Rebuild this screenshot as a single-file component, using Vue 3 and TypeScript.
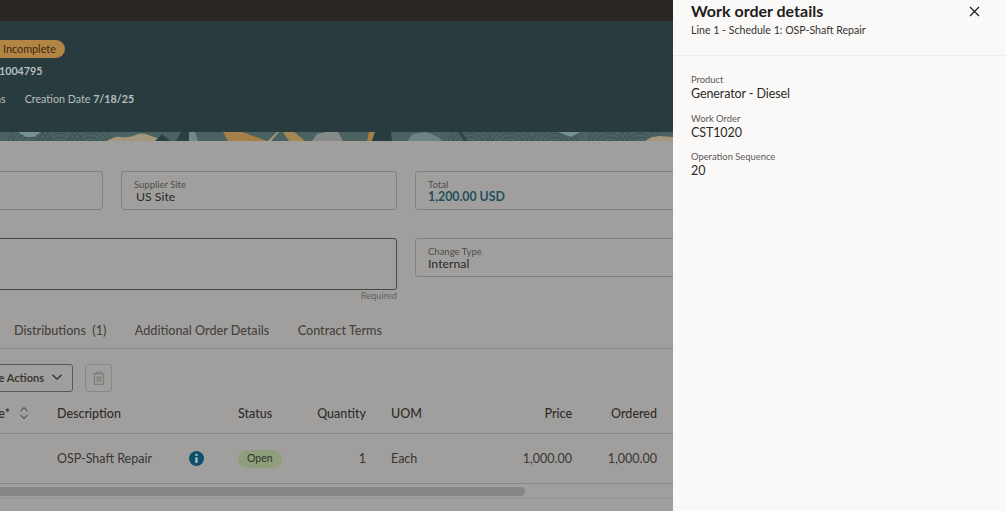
<script setup lang="ts">
interface Column { label: string; cls: string }
const columns: Column[] = [
  { label: 'Description', cls: 'left' },
  { label: 'Status', cls: 'left' },
  { label: 'Quantity', cls: 'right' },
  { label: 'UOM', cls: 'left uom' },
  { label: 'Price', cls: 'right' },
  { label: 'Ordered', cls: 'right' },
]
const details = [
  { label: 'Product', value: 'Generator - Diesel' },
  { label: 'Work Order', value: 'CST1020' },
  { label: 'Operation Sequence', value: '20' },
]
const arcs = [470, 510, 555, 610, 640, 30, 60, 90]
const rings = [3, 7, 11, 15, 19, 23]
</script>

<template>
  <div class="app">
    <main class="page">
      <div class="topbar"></div>
      <header class="hero">
        <div class="hero-text">
          <div class="badge-row"><span class="badge">Incomplete</span></div>
          <div class="order-no">1004795</div>
          <div class="meta">
            <span class="meta-item">Items</span>
            <span class="meta-item">Creation Date <b>7/18/25</b></span>
          </div>
        </div>
        <svg class="pattern" viewBox="0 0 673 9" width="673" height="9" preserveAspectRatio="none" aria-hidden="true">
          <rect width="673" height="9" fill="#4a6361" />
          <g v-for="x in arcs" :key="x" fill="none" stroke="#324a49" stroke-width=".7">
            <circle v-for="r in rings" :key="r" :cx="x" cy="16" :r="r" />
          </g>
          <path d="M18 0h23l-7 5H26z" fill="#76918f" />
          <path d="M107 9c5-3 9-5 14-4 7 1 13-1 17-3 6-2 12 2 27 7z" fill="#a5977c" />
          <path d="M155 9l7-7 8 7zM176 9l5-9h10v9z" fill="#2c4043" />
          <path d="M189 0h6l3 9h-9z" fill="#728988" />
          <path d="M223 0h19l25 9h-39z" fill="#a67f47" />
          <path d="M268 9l9-9h2l-8 9z" fill="#a99a7f" />
          <path d="M283 0h11l11 9h-16z" fill="#a68752" />
          <path d="M312 9l5-7 9-2h12l5 9z" fill="#868a88" />
          <path d="M367 9l2-9h6l-3 9z" fill="#a87d40" />
          <path d="M372 9l3-9h16l1 9z" fill="#293c3f" />
          <path d="M408 9l4-7 14-2 12 5 4 4z" fill="#6f8384" />
          <path d="M458 0h4l6 9h-4z" fill="#2f4746" />
          <path d="M558 0h22l-9 5z" fill="#76918f" />
          <path d="M645 9l7-4 8-1 13 1v4z" fill="#a5977c" />
        </svg>
      </header>

      <section class="form">
        <div class="field"></div>
        <div class="field">
          <label>Supplier Site</label>
          <div class="value inset">US Site</div>
        </div>
        <div class="field">
          <label>Total</label>
          <div class="value total">1,200.00 USD</div>
        </div>
        <div class="area-wrap">
          <div class="textarea"></div>
          <div class="required">Required</div>
        </div>
        <div class="field">
          <label>Change Type</label>
          <div class="value">Internal</div>
        </div>
      </section>

      <nav class="tabs">
        <span>Distributions&nbsp; (1)</span>
        <span>Additional Order Details</span>
        <span>Contract Terms</span>
      </nav>

      <div class="toolbar">
        <button class="actions" type="button">
          More Actions
          <svg width="12" height="12" viewBox="0 0 12 12" aria-hidden="true"><path d="M1.500 3.800 6 8.200l4.500-4.400" fill="none" stroke="#2f2d2b" stroke-width="1.300" /></svg>
        </button>
        <button class="trash" type="button" aria-label="Delete">
          <svg width="16" height="16" viewBox="0 0 16 16" aria-hidden="true">
            <path d="M2.500 3.800h11M6 3.600V2h4v1.600M3.500 3.800v10.400h9V3.800M6.200 6.200v5.600M8 6.200v5.600M9.800 6.200v5.600" fill="none" stroke="#7b7977" stroke-width="1.100" />
          </svg>
        </button>
      </div>

      <div class="row head">
        <div class="first">
          <span class="clip">Type*</span>
          <svg class="sort" width="10" height="14" viewBox="0 0 10 14" aria-hidden="true"><path d="M1.500 5 5 1.600 8.500 5M1.500 9 5 12.400 8.500 9" fill="none" stroke="#2f2d2b" stroke-width="1" /></svg>
        </div>
        <div v-for="c in columns" :key="c.label" :class="c.cls">{{ c.label }}</div>
      </div>

      <div class="row body">
        <div class="first"></div>
        <div class="left desc">
          <span>OSP-Shaft Repair</span>
          <svg class="info" width="15" height="15" viewBox="0 0 15 15" aria-hidden="true">
            <circle cx="7.500" cy="7.500" r="7.500" fill="#0f4e6a" />
            <circle cx="7.500" cy="3.900" r="1.200" fill="#a9c0c6" />
            <path d="M6.300 6.300h2.300v5.600H6.300z" fill="#a9c0c6" />
          </svg>
        </div>
        <div class="left"><span class="pill">Open</span></div>
        <div class="right">1</div>
        <div class="left uom">Each</div>
        <div class="right">1,000.00</div>
        <div class="right">1,000.00</div>
      </div>

      <div class="scrollbar"><div class="thumb"></div></div>
    </main>

    <aside class="panel">
      <div class="panel-head">
        <div class="titles">
          <h2>Work order details</h2>
          <p>Line 1 - Schedule 1: OSP-Shaft Repair</p>
        </div>
        <svg class="close" width="11" height="11" viewBox="0 0 11 11" aria-label="Close">
          <path d="M1 1l9 9M10 1l-9 9" stroke="#1f1d1b" stroke-width="1.200" fill="none" />
        </svg>
      </div>
      <div class="panel-body">
        <div v-for="d in details" :key="d.label" class="detail">
          <div class="d-label">{{ d.label }}</div>
          <div class="d-value">{{ d.value }}</div>
        </div>
      </div>
    </aside>
  </div>
</template>

<style scoped>
.app {
  display: flex;
  width: 1006px;
  height: 511px;
  overflow: hidden;
  font-family: Lato, "Noto Sans", sans-serif;
  color: #2b2927;
}
.page {
  width: 673px;
  flex: none;
  overflow: hidden;
  background: #a19f9d;
  display: flex;
  flex-direction: column;
}
.topbar { height: 21px; background: #2a2623; flex: none; }
.hero { background: #283c3f; flex: none; height: 120px; display: flex; flex-direction: column; justify-content: space-between; }
.hero-text { padding-top: 19px; color: #b9bebd; font-size: 10.700px; }
.badge-row { display: flex; height: 18px; }
.badge {
  margin-left: -20px;
  padding: 0 9px 0 23px;
  border-radius: 9px;
  background: #b38545;
  color: #3b2710;
  font-size: 10.800px;
  line-height: 18px;
}
.order-no { margin-top: 5px; margin-left: -1px; font-weight: 700; line-height: 16px; }
.meta { display: flex; gap: 19px; margin-top: 12px; margin-left: -20px; line-height: 16px; }
.meta b { font-weight: 700; }
.pattern { display: block; flex: none; }

.form {
  flex: none;
  margin: 30px 0 0 -173px;
  display: grid;
  grid-template-columns: 276px 276px 276px;
  gap: 28px 18px;
  align-items: start;
}
.field {
  height: 39px;
  box-sizing: border-box;
  border: 1px solid #838180;
  border-radius: 3px;
  padding: 7px 12px 0;
}
.field label { display: block; font-size: 9.500px; line-height: 11px; color: #4f4d4b; }
.value { font-size: 12.300px; line-height: 15px; margin-top: -1px; color: #2b2927; }
.inset { padding-left: 2px; }
.total { color: #1f4f5e; font-weight: 700; }
.area-wrap { grid-column: span 2; }
.textarea { height: 52px; box-sizing: border-box; border: 1px solid #4a4846; border-radius: 3px; }
.required { text-align: right; font-size: 9.300px; line-height: 12px; color: #63615f; }

.tabs {
  flex: none;
  display: flex;
  gap: 28.500px;
  padding: 0 0 9px 14px;
  margin-top: 21px;
  height: 26px;
  box-sizing: border-box;
  border-bottom: 1px solid #8a8886;
  font-size: 12.600px;
  line-height: 16px;
  color: #45433f;
  font-weight: 500;
  white-space: nowrap;
}
.toolbar { flex: none; display: flex; align-items: stretch; gap: 12px; margin: 15px 0 0 -40px; height: 28px; }
button { font-family: inherit; background: none; padding: 0 0 2px; }
.actions {
  width: 113px;
  border: 1px solid #5b5957;
  border-radius: 3px;
  font-size: 11px;
  font-weight: 700;
  color: #3a3836;
  display: flex;
  align-items: center;
  justify-content: flex-end;
  gap: 7px;
  padding-right: 9px;
  white-space: nowrap;
}
.trash {
  width: 27px;
  border: 1px solid #8a8886;
  border-radius: 3px;
  display: flex;
  align-items: center;
  justify-content: center;
  padding: 0;
}
.row {
  flex: none;
  display: grid;
  grid-template-columns: 57px 181px 62px 66px 134px 72px 85px;
  align-items: center;
  box-sizing: border-box;
  border-bottom: 1px solid #8a8886;
  font-size: 12.500px;
  white-space: nowrap;
}
.head { height: 41px; margin-top: 1px; font-weight: 500; color: #2f2d2b; }
.body { height: 50px; color: #383634; }
.first { display: flex; justify-content: flex-end; align-items: center; gap: 9px; padding-right: 28px; overflow: hidden; min-width: 0; }
.clip, .sort { flex: none; }
.left { text-align: left; }
.right { text-align: right; }
.uom { padding-left: 25px; }
.desc { display: flex; align-items: center; justify-content: space-between; padding-right: 34px; }
.info { flex: none; }
.pill {
  display: inline-block;
  padding: 0 9px;
  height: 18px;
  line-height: 17px;
  border-radius: 9px;
  background: #8f9e7b;
  font-size: 10.500px;
  color: #2f3327;
}
.scrollbar { flex: none; height: 15px; padding-top: 3px; box-sizing: border-box; border-bottom: 1px solid #969492; }
.thumb { width: 525px; height: 9px; border-radius: 0 5px 5px 0; background: #888684; }

.panel { flex: 1; background: #fbf9f8; min-width: 0; }
.panel-head {
  height: 56px;
  box-sizing: border-box;
  border-bottom: 1px solid #efedeb;
  padding: 1px 26px 0 18px;
  display: flex;
  justify-content: space-between;
  align-items: flex-start;
}
.titles h2 { margin: 0; font-size: 16px; line-height: 20px; font-weight: 700; color: #1f1d1b; }
.titles p { margin: 2px 0 0; font-size: 10.600px; line-height: 14px; color: #35332f; }
.close { margin-top: 5px; }
.panel-body { padding: 17px 18px 0; }
.detail { margin-bottom: 10.500px; }
.d-label { font-size: 9.400px; line-height: 13px; color: #5a5856; }
.d-value { font-size: 12.500px; line-height: 15px; letter-spacing: -.1px; color: #2b2927; }
</style>
